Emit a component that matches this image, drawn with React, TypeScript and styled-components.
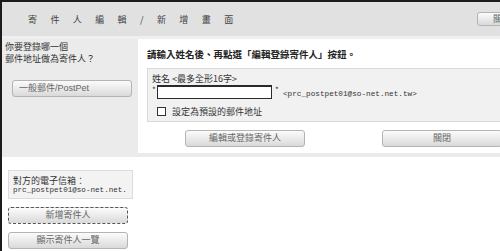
import styled, { createGlobalStyle } from 'styled-components';

const GlobalStyle = createGlobalStyle`
  html, body {
    margin: 0;
    padding: 0;
    background: #ffffff;
    overflow: hidden;
  }
  body {
    font-family: "Noto Sans CJK TC", "Noto Sans CJK JP", sans-serif;
    color: #333;
  }
`;

const Page = styled.div`
  width: 540px;
  height: 251px;
  border-top: 2px solid #1c1c1c;
  border-left: 2px solid #1c1c1c;
  box-sizing: border-box;
  display: flex;
  flex-direction: column;
`;

const Header = styled.div`
  height: 34px;
  background: #e1e1e1;
  border-bottom: 3px solid #efefef;
  display: flex;
  align-items: center;
  padding-left: 26px;
  padding-right: 13px;
`;

const Title = styled.div`
  flex: 1;
  font-size: 9px;
  letter-spacing: 13.4px;
  color: #444;
`;

const Button = styled.button<{ $w?: number; $h?: number; $focus?: boolean; $left?: boolean }>`
  width: ${(p) => p.$w ?? 120}px;
  height: ${(p) => p.$h ?? 17}px;
  padding: 0 6px;
  box-sizing: border-box;
  border: 1px ${(p) => (p.$focus ? 'dashed #555' : 'solid #b4b4b4')};
  border-radius: 3px;
  background: linear-gradient(#fbfbfb, #e9e9e9 55%, #d9d9d9);
  font-family: "Liberation Sans", "Noto Sans CJK TC", sans-serif;
  font-size: 9px;
  color: #666;
  text-align: ${(p) => (p.$left ? 'left' : 'center')};
  line-height: 1;
  cursor: pointer;
`;

const Main = styled.div`
  display: grid;
  grid-template-columns: 136px 1fr;
  height: 114px;
`;

const LeftCol = styled.div`
  background: #ebebeb;
  padding: 0 0 0 3px;
`;

const Question = styled.div`
  font-size: 9px;
  line-height: 12px;
  height: 32px;
  padding-top: 2px;
  box-sizing: border-box;
`;

const LeftButtons = styled.div`
  padding: 1px 0 0 7px;
`;

const RightCol = styled.div`
  background: #fff;
  padding-left: 9px;
`;

const Instruction = styled.div`
  height: 29px;
  display: flex;
  align-items: center;
  font-size: 9.5px;
  font-weight: bold;
  color: #222;
`;

const FormBox = styled.div`
  height: 54px;
  box-sizing: border-box;
  background: #f1f1f1;
  border: 1px solid #d9d9d9;
  border-right: none;
  padding: 4px 0 0 4px;
`;

const Label = styled.div`
  font-size: 9px;
  line-height: 11px;
`;

const InputRow = styled.div`
  display: flex;
  align-items: flex-end;
  height: 15px;
`;

const Star = styled.span`
  font-size: 8px;
  line-height: 8px;
  align-self: flex-start;
  width: 5px;
  margin-top: 2px;
`;

const NameInput = styled.input`
  width: 115px;
  height: 14px;
  box-sizing: border-box;
  border: 1px solid #2a2a2a;
  border-top-width: 2px;
  background: #fff;
  padding: 0;
  margin: 0 3px 0 0;
`;

const Mail = styled.span`
  font-family: "Liberation Mono", monospace;
  font-size: 7.7px;
  line-height: 9px;
  margin-left: 3px;
  margin-bottom: 0;
`;

const CheckRow = styled.label`
  display: flex;
  align-items: center;
  gap: 6px;
  margin-top: 6px;
  padding-left: 5px;
  font-size: 9px;
`;

const CheckBox = styled.input`
  appearance: none;
  width: 9px;
  height: 9px;
  margin: 0;
  border: 1px solid #333;
  background: #fff;
`;

const ButtonRow = styled.div`
  display: flex;
  gap: 77px;
  padding: 8px 0 0 38px;
`;

const Divider = styled.div`
  height: 4px;
  background: #ebebeb;
`;

const Bottom = styled.div`
  padding: 13px 0 0 6px;
  display: flex;
  flex-direction: column;
  gap: 8px;
`;

const InfoBox = styled.div`
  width: 125px;
  height: 29px;
  box-sizing: border-box;
  background: #f3f3f3;
  border: 1px solid #dcdcdc;
  padding: 4px 0 0 4px;
  overflow: hidden;
  white-space: nowrap;
  font-size: 9px;
  line-height: 11px;
`;

const InfoMail = styled.div`
  font-family: "Liberation Mono", monospace;
  font-size: 7.6px;
  line-height: 9px;
`;

export default function App() {
  return (
    <>
      <GlobalStyle />
      <Page>
        <Header>
          <Title>寄件人編輯/新增畫面</Title>
          <Button $w={50} $h={14}>關閉</Button>
        </Header>
        <Main>
          <LeftCol>
            <Question>
              你要登錄哪一個
              <br />
              郵件地址做為寄件人？
            </Question>
            <LeftButtons>
              <Button $left>一般郵件/PostPet</Button>
            </LeftButtons>
          </LeftCol>
          <RightCol>
            <Instruction>請輸入姓名後、再點選「編輯登錄寄件人」按鈕。</Instruction>
            <FormBox>
              <Label>姓名 &lt;最多全形16字&gt;</Label>
              <InputRow>
                <Star>*</Star>
                <NameInput type="text" />
                <Star>*</Star>
                <Mail>&lt;prc_postpet01@so-net.net.tw&gt;</Mail>
              </InputRow>
              <CheckRow>
                <CheckBox type="checkbox" />
                設定為預設的郵件地址
              </CheckRow>
            </FormBox>
            <ButtonRow>
              <Button>編輯或登錄寄件人</Button>
              <Button>關閉</Button>
            </ButtonRow>
          </RightCol>
        </Main>
        <Divider />
        <Bottom>
          <InfoBox>
            對方的電子信箱：
            <InfoMail>prc_postpet01@so-net.net.</InfoMail>
          </InfoBox>
          <Button $focus>新增寄件人</Button>
          <Button>顯示寄件人一覽</Button>
        </Bottom>
      </Page>
    </>
  );
}
